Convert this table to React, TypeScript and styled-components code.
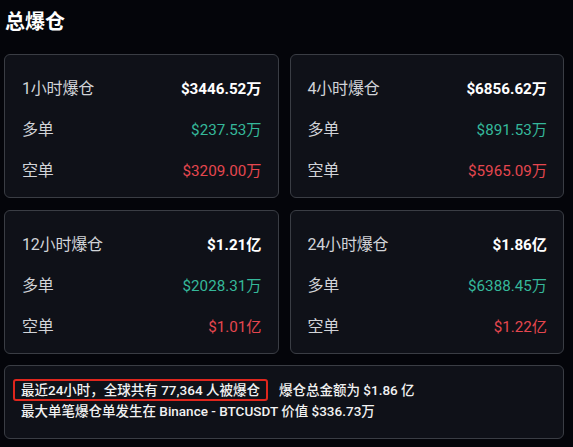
import React from "react";
import styled, { createGlobalStyle } from "styled-components";

const Global = createGlobalStyle`
  html, body {
    margin: 0;
    padding: 0;
    background: #04050a;
  }
  body {
    font-family: Roboto, "Noto Sans CJK SC", "Noto Sans", sans-serif;
    color: #ffffff;
  }
`;

const Page = styled.div`
  width: 573px;
  height: 447px;
  box-sizing: border-box;
  padding: 8px 9px 0 4px;
  background: #04050a;
  overflow: hidden;
`;

const Title = styled.h1`
  margin: 0 0 18px 1px;
  font-size: 20px;
  line-height: 28px;
  font-weight: 700;
  color: #ffffff;
`;

const Grid = styled.div`
  display: grid;
  grid-template-columns: 1fr 1fr;
  gap: 12px 11px;
`;

const Card = styled.div`
  box-sizing: border-box;
  height: 144px;
  padding: 13px 16px 6px 17px;
  background: #0f1118;
  border: 1px solid #3a3d44;
  border-radius: 6px;
  display: flex;
  flex-direction: column;
`;

const Row = styled.div`
  height: 41px;
  display: flex;
  align-items: center;
  justify-content: space-between;
  font-size: 16px;
  line-height: 20px;
`;

const Label = styled.span`
  color: #d2d4d8;
  letter-spacing: -0.2px;
`;

type Tone = "total" | "long" | "short";

const Value = styled.span<{ $tone: Tone }>`
  font-size: 15.2px;
  font-weight: ${(p) => (p.$tone === "total" ? 700 : 400)};
  color: ${(p) =>
    p.$tone === "total" ? "#ffffff" : p.$tone === "long" ? "#35b89a" : "#e5474f"};
`;

const Summary = styled.div`
  box-sizing: border-box;
  margin-top: 11px;
  height: 74px;
  padding: 14px 16px 15px 16px;
  background: #0f1118;
  border: 1px solid #3a3d44;
  border-radius: 6px;
  font-size: 13.5px;
  line-height: 21px;
  font-weight: 500;
  color: #f2f2f2;
`;

const Line = styled.div`
  white-space: nowrap;
`;

const Highlight = styled.span`
  margin-left: -8px;
  margin-right: 11px;
  padding: 1px 6px;
  border: 2px solid #e0261d;
  border-radius: 3px;
`;

const cards: { period: string; total: string; long: string; short: string }[] = [
  { period: "1小时爆仓", total: "$3446.52万", long: "$237.53万", short: "$3209.00万" },
  { period: "4小时爆仓", total: "$6856.62万", long: "$891.53万", short: "$5965.09万" },
  { period: "12小时爆仓", total: "$1.21亿", long: "$2028.31万", short: "$1.01亿" },
  { period: "24小时爆仓", total: "$1.86亿", long: "$6388.45万", short: "$1.22亿" },
];

export default function App() {
  return (
    <>
      <Global />
      <Page>
        <Title>总爆仓</Title>
        <Grid>
          {cards.map((c) => (
            <Card key={c.period}>
              <Row>
                <Label>{c.period}</Label>
                <Value $tone="total">{c.total}</Value>
              </Row>
              <Row>
                <Label>多单</Label>
                <Value $tone="long">{c.long}</Value>
              </Row>
              <Row>
                <Label>空单</Label>
                <Value $tone="short">{c.short}</Value>
              </Row>
            </Card>
          ))}
        </Grid>
        <Summary>
          <Line>
            <Highlight>最近24小时，全球共有 77,364 人被爆仓</Highlight>爆仓总金额为 $1.86 亿
          </Line>
          <Line>最大单笔爆仓单发生在 Binance - BTCUSDT 价值 $336.73万</Line>
        </Summary>
      </Page>
    </>
  );
}
